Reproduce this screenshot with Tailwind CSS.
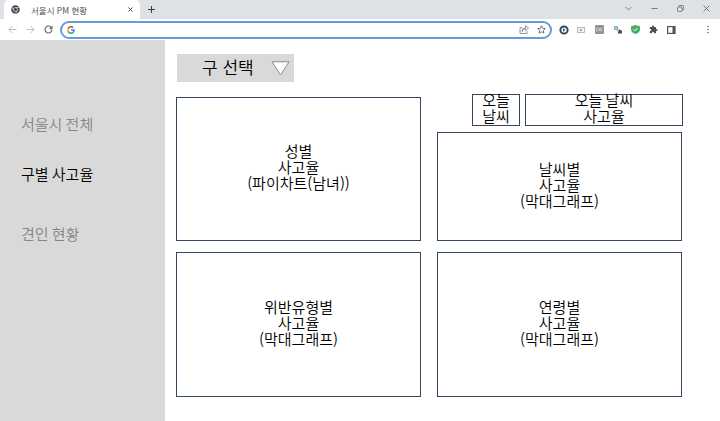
<!DOCTYPE html>
<html lang="ko">
<head>
<meta charset="utf-8">
<title>서울시 PM 현황</title>
<script src="https://cdn.jsdelivr.net/npm/@tailwindcss/browser@4"></script>
</head>
<body class="flex h-[421px] w-[720px] flex-col overflow-hidden bg-white font-['Noto_Sans_CJK_KR',sans-serif] text-[15px] font-[350] leading-4 text-black [word-spacing:-1px]">
  <!-- Tab strip -->
  <header class="flex h-[19px] shrink-0 bg-[#dee1e6] text-[#3c4043]">
    <div class="ml-1 flex w-[136px] items-center rounded-t-[5px] bg-white pl-[7px] pr-[7px]">
      <svg class="size-[9px]" viewBox="0 0 18 18"><circle cx="9" cy="9" r="8.5" fill="#41464b"/><path d="M9 5h8M5.5 11 2 4M12.5 11 9 17.5" stroke="#c9cccf" stroke-width="1.5"/><circle cx="9" cy="9" r="4" fill="#41464b" stroke="#e5e7e9" stroke-width="1.5"/></svg>
      <span class="ml-[11px] flex-1 whitespace-nowrap text-[8.5px] leading-3 [word-spacing:0]">서울시 PM 현황</span>
      <svg class="size-[5px]" viewBox="0 0 5 5"><path d="m.5.5 4 4m0-4-4 4" stroke="#3c4043"/></svg>
    </div>
    <svg class="ml-[8px] mt-[6px] size-[7px]" viewBox="0 0 7 7"><path d="M3.5 0v7M0 3.5h7" stroke="#3c4043" stroke-width="1.1"/></svg>
    <div class="ml-auto flex h-4 items-center gap-[19px] pr-[10px]">
      <svg class="size-[7px]" viewBox="0 0 7 7" fill="none"><path d="m.5 2 3 3 3-3" stroke="#5f6368" stroke-width=".8"/></svg>
      <svg class="size-[7px]" viewBox="0 0 7 7"><path d="M.5 3.5h6" stroke="#5f6368" stroke-width=".8"/></svg>
      <svg class="size-[7px]" viewBox="0 0 7 7" fill="none"><path d="M2 1.8V1.2Q2 .5 2.7.5h2.600q1.200 0 1.200 1.200v2.600q0 .7-.7.7h-.6" stroke="#5f6368" stroke-width=".8"/><rect x=".5" y="2" width="4.500" height="4.500" rx="1" stroke="#5f6368" stroke-width=".8"/></svg>
      <svg class="size-[7px]" viewBox="0 0 7 7"><path d="m.5.5 6 6m0-6-6 6" stroke="#5f6368" stroke-width=".8"/></svg>
    </div>
  </header>
  <!-- Toolbar -->
  <div class="flex h-[21px] shrink-0 items-center bg-white pl-[8px]">
    <svg class="size-[9px]" viewBox="0 0 9 9" fill="none"><path d="M8.500 4.500H1M4.500 1 1 4.500 4.500 8" stroke="#bcbfc3"/></svg>
    <svg class="ml-[9px] size-[9px]" viewBox="0 0 9 9" fill="none"><path d="M.5 4.500H8M4.500 1 8 4.500 4.500 8" stroke="#bcbfc3"/></svg>
    <svg class="ml-[9px] size-[9px]" viewBox="0 0 9 9" fill="none"><path d="M7.600 2.800A3.500 3.500 0 1 0 8 5" stroke="#5f6368" stroke-width="1.100"/><path d="M8.500.5v3.700H4.800z" fill="#5f6368"/></svg>
    <div class="ml-[7px] flex h-[18px] w-[492px] items-center rounded-full border-2 border-[#699ade] pl-[5px] pr-[4px]">
      <svg class="size-[8px]" viewBox="0 0 48 48"><path fill="#ea4335" d="M24 9.500c3.500 0 6.700 1.200 9.200 3.600l6.900-6.900A24 24 0 0 0 2.600 13.200l8 6.200C12.400 13.700 17.700 9.500 24 9.500"/><path fill="#4285f4" d="M47 24.500c0-1.600-.2-3-.4-4.500H24v9h13c-.6 3-2.300 5.500-4.800 7.200l7.700 6C44.400 38 47 31.800 47 24.500"/><path fill="#fbbc05" d="M10.500 28.600a14 14 0 0 1 0-9.200l-8-6.200a24 24 0 0 0 0 21.600z"/><path fill="#34a853" d="M24 48c6.500 0 12-2.100 15.900-5.800l-7.700-6c-2.200 1.500-5 2.300-8.200 2.300-6.300 0-11.600-4.200-13.500-9.900l-8 6.200A24 24 0 0 0 24 48"/></svg>
      <svg class="ml-auto h-[9px] w-[10px]" viewBox="0 0 10 9" fill="none" stroke="#777b80" stroke-width=".8"><path d="M3 2.500H1v6h7V6M3 6.500q.3-3 3.500-3V5.500l3-2.500L6.500.7v1.800Q3 3 3 6.500z"/></svg>
      <svg class="ml-[8px] size-[9px]" viewBox="0 0 18 18" fill="none"><path d="m9 1.500 2.300 5 5.400.6-4 3.700 1.100 5.400L9 13.500l-4.800 2.700 1.100-5.400-4-3.700 5.400-.6z" stroke="#5f6368" stroke-width="1.800"/></svg>
    </div>
    <svg class="ml-[7px] size-[10px]" viewBox="0 0 20 20"><circle cx="10" cy="10" r="7.200" fill="white" stroke="#34495e" stroke-width="4"/><path d="m7.500 5.500 5 4.500-3.500 4z" fill="#34495e"/></svg>
    <svg class="ml-[8px] h-[6px] w-[8px]" viewBox="0 0 8 6"><rect x=".5" y=".5" width="7" height="5" fill="#f4f4f4" stroke="#aaa" stroke-width=".8"/><path d="m3 2 2 2m0-2L3 4" stroke="#888" stroke-width=".7"/></svg>
    <svg class="ml-[10px] size-[9px]" viewBox="0 0 9 9"><rect width="9" height="9" rx="1" fill="#929292"/><path d="M3 3H1.500v3H3M4 3v3m0-1.500h1M5 3v3M7.500 3H6v3h1.500" fill="none" stroke="#ddd" stroke-width=".7"/></svg>
    <svg class="ml-[9px] size-[9px]" viewBox="0 0 9 9"><circle cx="3" cy="3" r="2.300" fill="#89aabd"/><circle cx="3" cy="3" r=".8" fill="#e4eef2"/><circle cx="5" cy="5.500" r="1" fill="#7ea3b7"/><path d="m4.500 8.500 2-4.200L9 6v2.500z" fill="#424b57"/></svg>
    <svg class="ml-[9px] size-[9px]" viewBox="0 0 18 18"><path d="m9 0 9 2.500V9c0 5-5 8-9 9-4-1-9-4-9-9V2.500z" fill="#4eac63"/><path d="m5 8.500 3 3 5-5" fill="none" stroke="white" stroke-width="2"/></svg>
    <svg class="ml-[9px] size-[9px]" viewBox="0 0 24 24"><path fill="#4c5054" d="M20.500 11H19V7a2 2 0 0 0-2-2h-4V3.500a2.500 2.500 0 0 0-5 0V5H4a2 2 0 0 0-2 2v3.800h1.500a2.700 2.700 0 0 1 0 5.400H2V20a2 2 0 0 0 2 2h3.800v-1.500a2.700 2.700 0 0 1 5.400 0V22H17a2 2 0 0 0 2-2v-4h1.500a2.500 2.500 0 0 0 0-5"/></svg>
    <svg class="ml-[9px] h-[8px] w-[9px]" viewBox="0 0 9 8"><rect x=".6" y=".6" width="7.400" height="6.800" fill="white" stroke="#505458" stroke-width="1.200"/><path d="M5.500 1h2.500v6H5.500z" fill="#505458"/></svg>
    <svg class="ml-auto mr-[11px] h-[9px] w-[2px]" viewBox="0 0 2 9" fill="#5f6368"><circle cx="1" cy="1.500" r=".8"/><circle cx="1" cy="4.500" r=".8"/><circle cx="1" cy="7.500" r=".8"/></svg>
  </div>
  <div class="flex min-h-0 flex-1">
    <nav class="flex w-[165px] shrink-0 flex-col bg-[#d9d9d9] pl-[21px] pt-[76px] text-[#858585]">
      <a>서울시 전체</a>
      <a class="mt-[34px] text-black">구별 사고율</a>
      <a class="mt-[44px]">견인 현황</a>
    </nav>
    <main class="flex gap-4 pl-[11px] pt-[14px] text-center">
      <section class="flex w-[245px] flex-col">
        <button class="ml-px flex h-[28px] w-[117px] items-center bg-[#d9d9d9] pl-[25px] text-[17px]"><span class="-mt-[2px]">구 선택</span>
          <svg class="ml-auto mr-[4px] h-[15px] w-[19px]" viewBox="0 0 19 15"><path d="M1 .8h17L9.500 14z" fill="white" stroke="#8c8c8c"/></svg>
        </button>
        <div class="mt-[15px] flex h-[144px] items-center justify-center border border-[#34475e] pb-[4px]"><p>성별<br>사고율<br>(파이차트(남녀))</p></div>
        <div class="mt-[11px] flex h-[145px] items-center justify-center border border-[#34475e] pb-[4px]"><p>위반유형별<br>사고율<br>(막대그래프)</p></div>
      </section>
      <section class="flex w-[246px] flex-col pt-[40px]">
        <div class="flex h-[32px] gap-[5px] pl-[35px]">
          <div class="flex w-[48px] items-center justify-center border border-[#34475e] pb-[4px]"><p>오늘<br>날씨</p></div>
          <div class="flex w-[158px] items-center justify-center border border-[#34475e] pb-[4px]"><p>오늘 날씨<br>사고율</p></div>
        </div>
        <div class="mt-[6px] flex h-[109px] w-[245px] items-center justify-center border border-[#34475e] pb-[4px]"><p>날씨별<br>사고율<br>(막대그래프)</p></div>
        <div class="mt-[11px] flex h-[145px] w-[245px] items-center justify-center border border-[#34475e] pb-[4px]"><p>연령별<br>사고율<br>(막대그래프)</p></div>
      </section>
    </main>
  </div>
</body>
</html>
